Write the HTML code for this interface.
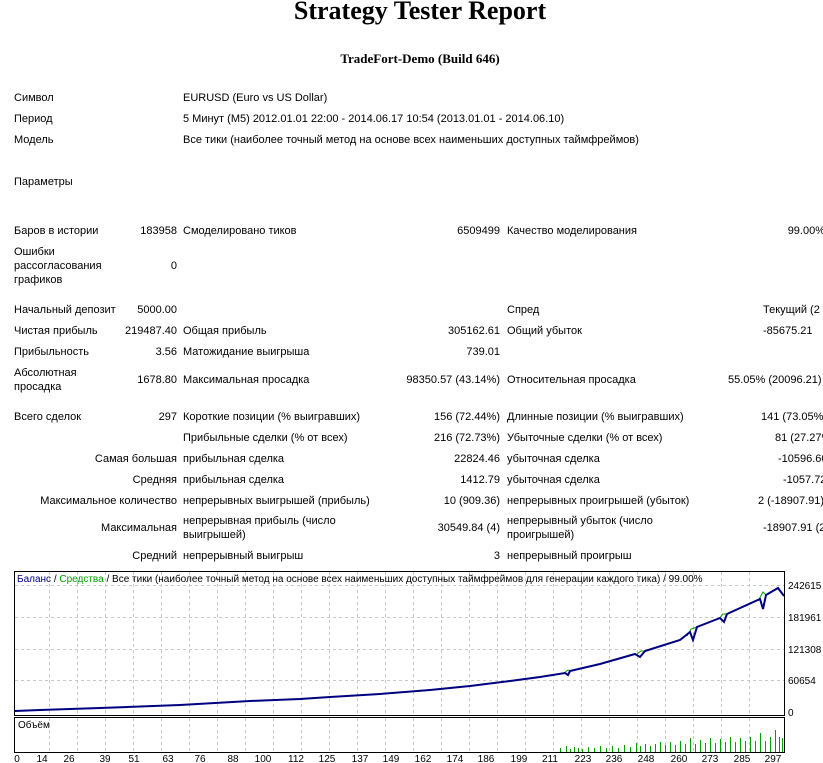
<!DOCTYPE html>
<html><head><meta charset="utf-8"><style>
body{margin:0;width:823px;height:763px;overflow:hidden;background:#fff;position:relative;font-family:"Liberation Sans",sans-serif;font-size:11px;color:#000}
div{position:absolute;white-space:nowrap;line-height:14px}
.t{font-family:"Liberation Serif",serif;font-weight:bold}
.r{text-align:right}
</style></head><body>
<div class="t" style="left:0;width:840px;text-align:center;top:-4px;font-size:26px;line-height:30px">Strategy Tester Report</div>
<div class="t" style="left:0;width:840px;text-align:center;top:52px;font-size:13px">TradeFort-Demo (Build 646)</div>

<div style="left:14px;top:91px">Символ</div><div style="left:183px;top:91px">EURUSD (Euro vs US Dollar)</div>
<div style="left:14px;top:112px">Период</div><div style="left:183px;top:112px">5 Минут (M5) 2012.01.01 22:00 - 2014.06.17 10:54 (2013.01.01 - 2014.06.10)</div>
<div style="left:14px;top:133px">Модель</div><div style="left:183px;top:133px">Все тики (наиболее точный метод на основе всех наименьших доступных таймфреймов)</div>
<div style="left:14px;top:175px">Параметры</div>

<div style="left:14px;top:224px">Баров в истории</div><div class="r" style="right:646px;top:224px">183958</div>
<div style="left:183px;top:224px">Смоделировано тиков</div><div class="r" style="right:323px;top:224px">6509499</div>
<div style="left:507px;top:224px">Качество моделирования</div><div class="r" style="right:-2px;top:224px">99.00%</div>
<div style="left:14px;top:245px">Ошибки<br>рассогласования<br>графиков</div><div class="r" style="right:646px;top:259px">0</div>

<div style="left:14px;top:303px">Начальный депозит</div><div class="r" style="right:646px;top:303px">5000.00</div>
<div style="left:507px;top:303px">Спред</div><div style="left:763px;top:303px">Текущий (2</div>
<div style="left:14px;top:324px">Чистая прибыль</div><div class="r" style="right:646px;top:324px">219487.40</div>
<div style="left:183px;top:324px">Общая прибыль</div><div class="r" style="right:323px;top:324px">305162.61</div>
<div style="left:507px;top:324px">Общий убыток</div><div style="left:763px;top:324px">-85675.21</div>
<div style="left:14px;top:345px">Прибыльность</div><div class="r" style="right:646px;top:345px">3.56</div>
<div style="left:183px;top:345px">Матожидание выигрыша</div><div class="r" style="right:323px;top:345px">739.01</div>
<div style="left:14px;top:366px">Абсолютная<br>просадка</div><div class="r" style="right:646px;top:373px">1678.80</div>
<div style="left:183px;top:373px">Максимальная просадка</div><div class="r" style="right:323px;top:373px">98350.57 (43.14%)</div>
<div style="left:507px;top:373px">Относительная просадка</div><div style="left:728px;top:373px">55.05% (20096.21)</div>

<div style="left:14px;top:410px">Всего сделок</div><div class="r" style="right:646px;top:410px">297</div>
<div style="left:183px;top:410px">Короткие позиции (% выигравших)</div><div class="r" style="right:323px;top:410px">156 (72.44%)</div>
<div style="left:507px;top:410px">Длинные позиции (% выигравших)</div><div style="left:761px;top:410px">141 (73.05%)</div>
<div style="left:183px;top:431px">Прибыльные сделки (% от всех)</div><div class="r" style="right:323px;top:431px">216 (72.73%)</div>
<div style="left:507px;top:431px">Убыточные сделки (% от всех)</div><div style="left:775px;top:431px">81 (27.27%)</div>
<div class="r" style="right:646px;top:452px">Самая большая</div><div style="left:183px;top:452px">прибыльная сделка</div><div class="r" style="right:323px;top:452px">22824.46</div>
<div style="left:507px;top:452px">убыточная сделка</div><div style="left:778px;top:452px">-10596.60</div>
<div class="r" style="right:646px;top:473px">Средняя</div><div style="left:183px;top:473px">прибыльная сделка</div><div class="r" style="right:323px;top:473px">1412.79</div>
<div style="left:507px;top:473px">убыточная сделка</div><div style="left:783px;top:473px">-1057.72</div>
<div class="r" style="right:646px;top:494px">Максимальное количество</div><div style="left:183px;top:494px">непрерывных выигрышей (прибыль)</div><div class="r" style="right:323px;top:494px">10 (909.36)</div>
<div style="left:507px;top:494px">непрерывных проигрышей (убыток)</div><div style="left:758px;top:494px">2 (-18907.91)</div>
<div class="r" style="right:646px;top:521px">Максимальная</div><div style="left:183px;top:514px">непрерывная прибыль (число<br>выигрышей)</div><div class="r" style="right:323px;top:521px">30549.84 (4)</div>
<div style="left:507px;top:514px">непрерывный убыток (число<br>проигрышей)</div><div style="left:763px;top:521px">-18907.91 (2)</div>
<div class="r" style="right:646px;top:549px">Средний</div><div style="left:183px;top:549px">непрерывный выигрыш</div><div class="r" style="right:323px;top:549px">3</div>
<div style="left:507px;top:549px">непрерывный проигрыш</div>

<svg style="position:absolute;left:0;top:0" width="823" height="763">
<g fill="none" stroke="#000" stroke-width="1">
<rect x="14.5" y="571.5" width="770" height="144"/>
<rect x="14.5" y="717.5" width="770" height="35"/>
</g>
<g stroke="#c8c8c8" stroke-dasharray="3,3" stroke-width="1">
<line x1="15" y1="585.5" x2="784" y2="585.5"/><line x1="15" y1="617.5" x2="784" y2="617.5"/>
<line x1="15" y1="649.5" x2="784" y2="649.5"/><line x1="15" y1="680.5" x2="784" y2="680.5"/>
<path d="M49.5 572V715M77.5 572V715M105.5 572V715M133.5 572V715M161.5 572V715M189.5 572V715M217.5 572V715M245.5 572V715M273.5 572V715M301.5 572V715M329.5 572V715M357.5 572V715M385.5 572V715M413.5 572V715M441.5 572V715M469.5 572V715M497.5 572V715M525.5 572V715M553.5 572V715M581.5 572V715M609.5 572V715M637.5 572V715M665.5 572V715M693.5 572V715M721.5 572V715M749.5 572V715"/>
<path d="M49.5 718V752M77.5 718V752M105.5 718V752M133.5 718V752M161.5 718V752M189.5 718V752M217.5 718V752M245.5 718V752M273.5 718V752M301.5 718V752M329.5 718V752M357.5 718V752M385.5 718V752M413.5 718V752M441.5 718V752M469.5 718V752M497.5 718V752M525.5 718V752M553.5 718V752M581.5 718V752M609.5 718V752M637.5 718V752M665.5 718V752M693.5 718V752M721.5 718V752M749.5 718V752"/>
</g>
<g fill="none" stroke="#00a000" stroke-width="1">
<polyline points="564,673 568,670 571,671"/>
<polyline points="637,654 641,651 645,651"/>
<polyline points="687,636 691,629 697,627"/>
<polyline points="719,619 723,614 727,614"/>
<polyline points="758,601 763,592 766,595"/>
</g>
<polyline fill="none" stroke="#000080" stroke-width="2" points="15,711 40,710 100,708 180,705 250,701 300,699 330,697 380,694 430,690 470,686 510,681 540,677 565,673 568,675 570,671 600,664 635,654 640,657 645,651 680,640 690,632 693,640 697,627 720,618 724,622 727,614 760,599 763,609 766,595 778,588 784,596"/>
<g stroke="#00a000" stroke-width="1">
<line x1="560.5" y1="752" x2="560.5" y2="748"/><line x1="566.5" y1="752" x2="566.5" y2="746"/><line x1="570.5" y1="752" x2="570.5" y2="749"/><line x1="574.5" y1="752" x2="574.5" y2="747"/><line x1="578.5" y1="752" x2="578.5" y2="748"/><line x1="582.5" y1="752" x2="582.5" y2="749"/><line x1="588.5" y1="752" x2="588.5" y2="747"/><line x1="594.5" y1="752" x2="594.5" y2="748"/><line x1="600.5" y1="752" x2="600.5" y2="746"/><line x1="606.5" y1="752" x2="606.5" y2="748"/><line x1="612.5" y1="752" x2="612.5" y2="746"/><line x1="618.5" y1="752" x2="618.5" y2="748"/><line x1="624.5" y1="752" x2="624.5" y2="745"/><line x1="630.5" y1="752" x2="630.5" y2="747"/><line x1="636.5" y1="752" x2="636.5" y2="743"/><line x1="640.5" y1="752" x2="640.5" y2="746"/><line x1="645.5" y1="752" x2="645.5" y2="744"/><line x1="650.5" y1="752" x2="650.5" y2="746"/><line x1="655.5" y1="752" x2="655.5" y2="744"/><line x1="660.5" y1="752" x2="660.5" y2="742"/><line x1="665.5" y1="752" x2="665.5" y2="745"/><line x1="670.5" y1="752" x2="670.5" y2="742"/><line x1="675.5" y1="752" x2="675.5" y2="745"/><line x1="680.5" y1="752" x2="680.5" y2="741"/><line x1="685.5" y1="752" x2="685.5" y2="744"/><line x1="690.5" y1="752" x2="690.5" y2="738"/><line x1="695.5" y1="752" x2="695.5" y2="744"/><line x1="700.5" y1="752" x2="700.5" y2="740"/><line x1="705.5" y1="752" x2="705.5" y2="743"/><line x1="710.5" y1="752" x2="710.5" y2="738"/><line x1="715.5" y1="752" x2="715.5" y2="743"/><line x1="720.5" y1="752" x2="720.5" y2="739"/><line x1="725.5" y1="752" x2="725.5" y2="742"/><line x1="730.5" y1="752" x2="730.5" y2="737"/><line x1="735.5" y1="752" x2="735.5" y2="742"/><line x1="740.5" y1="752" x2="740.5" y2="738"/><line x1="745.5" y1="752" x2="745.5" y2="741"/><line x1="750.5" y1="752" x2="750.5" y2="737"/><line x1="755.5" y1="752" x2="755.5" y2="741"/><line x1="760.5" y1="752" x2="760.5" y2="733"/><line x1="765.5" y1="752" x2="765.5" y2="741"/><line x1="770.5" y1="752" x2="770.5" y2="737"/><line x1="775.5" y1="752" x2="775.5" y2="730"/><line x1="779.5" y1="752" x2="779.5" y2="737"/><line x1="782.5" y1="752" x2="782.5" y2="738"/>
</g>
<g font-family="Liberation Sans, sans-serif" font-size="10" fill="#000">
<text x="788" y="589">242615</text><text x="788" y="621">181961</text><text x="788" y="653">121308</text><text x="788" y="684">60654</text><text x="788" y="716">0</text>
<text x="17" y="582"><tspan fill="#000080">Баланс</tspan> / <tspan fill="#00a000">Средства</tspan> / Все тики (наиболее точный метод на основе всех наименьших доступных таймфреймов для генерации каждого тика) / 99.00%</text>
<text x="18" y="728">Объём</text>
<g text-anchor="middle">
<text x="17" y="762">0</text><text x="42" y="762">14</text><text x="69" y="762">26</text><text x="105" y="762">39</text><text x="134" y="762">51</text><text x="168" y="762">63</text><text x="200" y="762">76</text><text x="233" y="762">88</text><text x="263" y="762">100</text><text x="296" y="762">112</text><text x="327" y="762">125</text><text x="360" y="762">137</text><text x="391" y="762">149</text><text x="423" y="762">162</text><text x="455" y="762">174</text><text x="486" y="762">186</text><text x="519" y="762">199</text><text x="550" y="762">211</text><text x="583" y="762">223</text><text x="614" y="762">236</text><text x="646" y="762">248</text><text x="679" y="762">260</text><text x="710" y="762">273</text><text x="742" y="762">285</text><text x="773" y="762">297</text>
</g></g>
</svg>
</body></html>
